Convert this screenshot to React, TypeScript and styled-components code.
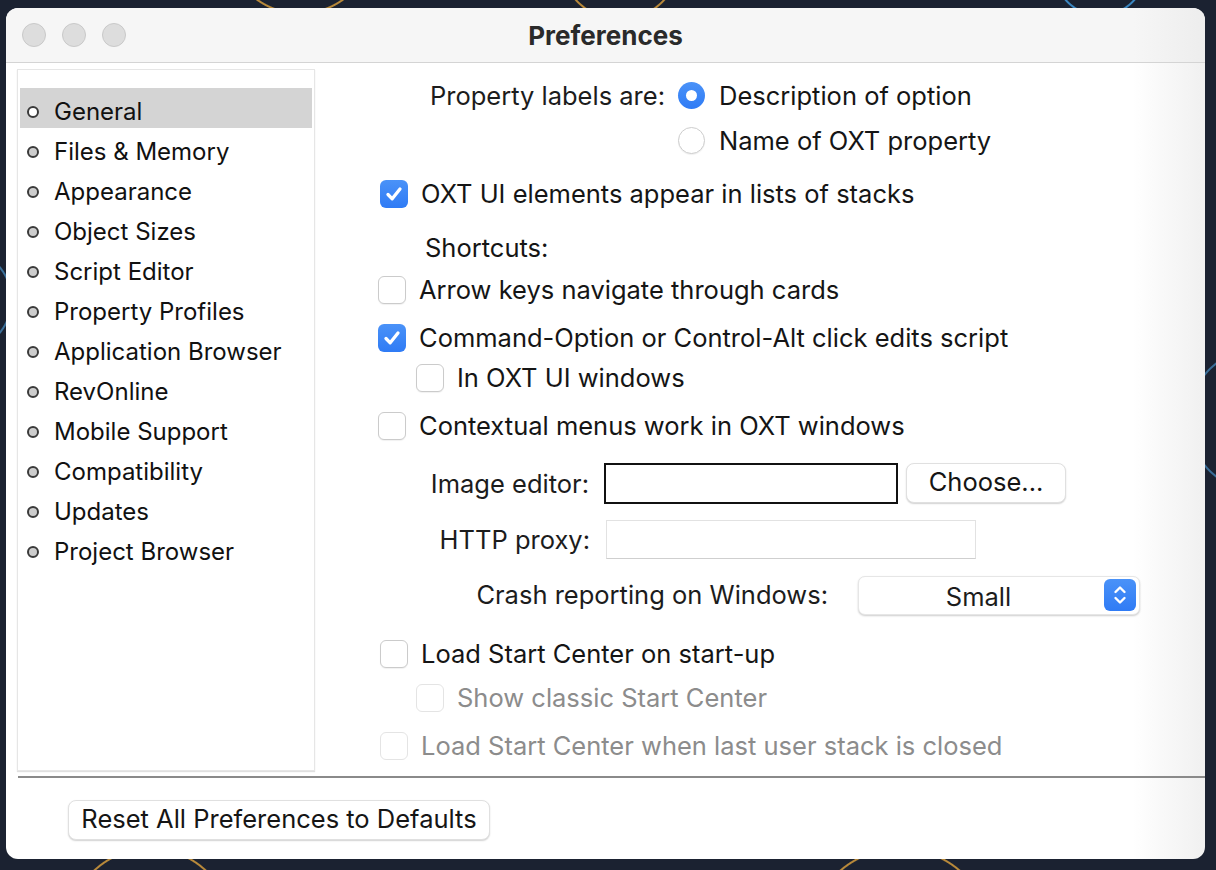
import React from "react";
import styled, { createGlobalStyle, css } from "styled-components";

const Global = createGlobalStyle`
  html, body { margin: 0; padding: 0; }
  body {
    background: #1b2231;
    font-family: Inter, "Noto Sans", "Liberation Sans", sans-serif;
    color: #1c1c1c;
    -webkit-font-smoothing: antialiased;
  }
`;

const Desktop = styled.div`
  width: 1216px;
  height: 870px;
  box-sizing: border-box;
  padding: 8px 11px 11px 6px;
  background:
    radial-gradient(circle at 300px -60px, transparent 72px, #b8893a 73px, #b8893a 74px, transparent 75px),
    radial-gradient(circle at 620px -40px, transparent 58px, #b8893a 59px, #b8893a 60px, transparent 61px),
    radial-gradient(circle at 1100px -30px, transparent 44px, #3a86c0 45px, #3a86c0 46px, transparent 47px),
    radial-gradient(circle at 1260px 420px, transparent 70px, #3a6f9a 71px, #3a6f9a 72px, transparent 73px),
    radial-gradient(circle at 150px 930px, transparent 80px, #b8893a 81px, #b8893a 82px, transparent 83px),
    radial-gradient(circle at 900px 940px, transparent 90px, #b8893a 91px, #b8893a 92px, transparent 93px),
    radial-gradient(circle at -40px 300px, transparent 50px, #3a6f9a 51px, #3a6f9a 52px, transparent 53px),
    #1b2231;
`;

const Window = styled.div`
  width: 1199px;
  height: 851px;
  border-radius: 12px;
  overflow: hidden;
  display: flex;
  flex-direction: column;
  background: linear-gradient(to right, #ffffff 0%, #ffffff 94%, #f0f0f0 100%);
`;

const TitleBar = styled.div`
  height: 54px;
  flex: none;
  display: grid;
  grid-template-columns: 1fr auto 1fr;
  align-items: center;
  background: linear-gradient(to right, #f6f6f6 0%, #f6f6f6 94%, #ededed 100%);
  border-bottom: 1px solid #d4d4d4;
`;

const Lights = styled.div`
  display: flex;
  gap: 16px;
  padding-left: 16px;
`;

const Light = styled.span`
  width: 24px;
  height: 24px;
  border-radius: 50%;
  box-sizing: border-box;
  background: #dddddd;
  border: 1px solid #c9c9c9;
`;

const Title = styled.div`
  font-size: 26px;
  font-weight: 700;
  color: #2a2a2a;
`;

const Main = styled.div`
  display: flex;
  padding: 6px 0 0 11px;
  height: 708px;
  box-sizing: border-box;
  flex: none;
`;

const Sidebar = styled.ul`
  list-style: none;
  margin: 0;
  width: 298px;
  height: 702px;
  box-sizing: border-box;
  padding: 18px 2px 0;
  border: 1px solid #e6e6e6;
  box-shadow: 0 1px 1px rgba(0, 0, 0, 0.12);
  background: #fff;
  flex: none;
`;

const NavItem = styled.li<{ $active?: boolean }>`
  height: 40px;
  box-sizing: border-box;
  display: flex;
  align-items: center;
  padding: 7px 0 0 7px;
  font-size: 24px;
  color: #111;
  background: ${(p) => (p.$active ? "#d4d4d4" : "transparent")};
`;

const Bullet = styled.span<{ $active?: boolean }>`
  width: 12px;
  height: 12px;
  box-sizing: border-box;
  border-radius: 50%;
  border: 2px solid #3a3a3a;
  background: ${(p) => (p.$active ? "#ffffff" : "#cdcdcd")};
  margin-right: 15px;
  flex: none;
`;

const Content = styled.div`
  flex: 1;
  display: flex;
  flex-direction: column;
`;

const Row = styled.div<{ $mt: number; $indent?: number; $h?: number }>`
  display: flex;
  align-items: center;
  box-sizing: border-box;
  margin-top: ${(p) => p.$mt}px;
  padding-left: ${(p) => p.$indent ?? 0}px;
  padding-bottom: 2px;
  height: ${(p) => (p.$h ?? 40) + 2}px;
  margin-bottom: -2px;
  font-size: 25.5px;
`;

const RightLabel = styled.span<{ $w: number; $gap: number }>`
  width: ${(p) => p.$w}px;
  margin-right: ${(p) => p.$gap}px;
  text-align: right;
  flex: none;
  white-space: nowrap;
`;

const Text = styled.span<{ $disabled?: boolean }>`
  white-space: nowrap;
  color: ${(p) => (p.$disabled ? "#8c8c8c" : "#151515")};
`;

const Radio = styled.span<{ $on?: boolean }>`
  width: 27px;
  height: 27px;
  border-radius: 50%;
  box-sizing: border-box;
  flex: none;
  margin-right: 14px;
  margin-top: 1px;
  display: flex;
  align-items: center;
  justify-content: center;
  ${(p) =>
    p.$on
      ? css`
          background: linear-gradient(#4a92f8, #2f7bf5);
          &::after {
            content: "";
            width: 11px;
            height: 11px;
            border-radius: 50%;
            background: #fff;
          }
        `
      : css`
          background: #fff;
          border: 1px solid #cdcdcd;
          box-shadow: 0 1px 1px rgba(0, 0, 0, 0.06);
        `}
`;

const Box = styled.span<{ $on?: boolean; $disabled?: boolean }>`
  width: 28px;
  height: 28px;
  border-radius: 6px;
  box-sizing: border-box;
  flex: none;
  margin-right: 13px;
  margin-top: 1px;
  display: flex;
  align-items: center;
  justify-content: center;
  ${(p) =>
    p.$on
      ? css`
          background: linear-gradient(#4a92f8, #2f7bf5);
        `
      : css`
          background: #fff;
          border: 1px solid ${p.$disabled ? "#e4e4e4" : "#cbcbcb"};
          box-shadow: ${p.$disabled ? "none" : "0 1px 1px rgba(0,0,0,0.06)"};
        `}
`;

const Check = () => (
  <svg width="22" height="22" viewBox="0 0 22 22">
    <path d="M5 11.5 L9.2 15.8 L17 6" fill="none" stroke="#fff" strokeWidth="3.3" strokeLinecap="round" strokeLinejoin="round" />
  </svg>
);

const Field = styled.div<{ $w: number; $h: number; $strong?: boolean }>`
  width: ${(p) => p.$w}px;
  height: ${(p) => p.$h}px;
  box-sizing: border-box;
  flex: none;
  background: #fff;
  ${(p) =>
    p.$strong
      ? css`
          border: 2px solid #111;
        `
      : css`
          border: 1px solid #e2e2e2;
          border-bottom-color: #cfcfcf;
        `}
`;

const Spacer = styled.span<{ $w: number }>`
  width: ${(p) => p.$w}px;
  flex: none;
`;

const Button = styled.button<{ $w: number }>`
  width: ${(p) => p.$w}px;
  height: 40px;
  flex: none;
  box-sizing: border-box;
  background: #fff;
  border: 1px solid #e0e0e0;
  border-radius: 8px;
  box-shadow: 0 1px 1.5px rgba(0, 0, 0, 0.18);
  font-family: inherit;
  font-size: 25.5px;
  color: #151515;
  padding: 0 0 3px;
  display: flex;
  align-items: center;
  justify-content: center;
  white-space: nowrap;
`;

const Popup = styled.div`
  width: 282px;
  height: 39px;
  box-sizing: border-box;
  flex: none;
  background: #fff;
  border-radius: 7px;
  border: 1px solid #e6e6e6;
  box-shadow: 0 1px 2px rgba(0, 0, 0, 0.2);
  display: flex;
  align-items: center;
  padding: 0 3px 0 0;
  margin-top: 2px;
`;

const PopupValue = styled.span`
  flex: 1;
  text-align: center;
  font-size: 25.5px;
  padding-right: 6px;
  padding-top: 3px;
`;

const Stepper = styled.span`
  width: 32px;
  height: 32px;
  border-radius: 6px;
  background: linear-gradient(#4a92f8, #2f7bf5);
  display: flex;
  align-items: center;
  justify-content: center;
`;

const Separator = styled.div`
  margin: 5px 0 0 12px;
  height: 2px;
  background: #8a8a8a;
  flex: none;
`;

const Footer = styled.div`
  padding: 22px 0 0 62px;
  display: flex;
`;

const navItems = [
  "General",
  "Files & Memory",
  "Appearance",
  "Object Sizes",
  "Script Editor",
  "Property Profiles",
  "Application Browser",
  "RevOnline",
  "Mobile Support",
  "Compatibility",
  "Updates",
  "Project Browser",
];

export default function App() {
  return (
    <>
      <Global />
      <Desktop>
        <Window>
          <TitleBar>
            <Lights>
              <Light />
              <Light />
              <Light />
            </Lights>
            <Title>Preferences</Title>
            <div />
          </TitleBar>
          <Main>
            <Sidebar>
              {navItems.map((n, i) => (
                <NavItem key={n} $active={i === 0}>
                  <Bullet $active={i === 0} />
                  {n}
                </NavItem>
              ))}
            </Sidebar>
            <Content>
              <Row $mt={6}>
                <RightLabel $w={350} $gap={13}>Property labels are:</RightLabel>
                <Radio $on />
                <Text>Description of option</Text>
              </Row>
              <Row $mt={5} $indent={363}>
                <Radio />
                <Text>Name of OXT property</Text>
              </Row>
              <Row $mt={13} $indent={65}>
                <Box $on>
                  <Check />
                </Box>
                <Text>OXT UI elements appear in lists of stacks</Text>
              </Row>
              <Row $mt={14} $indent={110}>
                <Text>Shortcuts:</Text>
              </Row>
              <Row $mt={2} $indent={63}>
                <Box />
                <Text>Arrow keys navigate through cards</Text>
              </Row>
              <Row $mt={8} $indent={63}>
                <Box $on>
                  <Check />
                </Box>
                <Text>Command-Option or Control-Alt click edits script</Text>
              </Row>
              <Row $mt={0} $indent={101}>
                <Box />
                <Text>In OXT UI windows</Text>
              </Row>
              <Row $mt={8} $indent={63}>
                <Box />
                <Text>Contextual menus work in OXT windows</Text>
              </Row>
              <Row $mt={17} $h={42}>
                <RightLabel $w={274} $gap={15}>Image editor:</RightLabel>
                <Field $w={294} $h={41} $strong />
                <Spacer $w={8} />
                <Button $w={160}>Choose...</Button>
              </Row>
              <Row $mt={15}>
                <RightLabel $w={275} $gap={16}>HTTP proxy:</RightLabel>
                <Field $w={370} $h={39} />
              </Row>
              <Row $mt={15}>
                <RightLabel $w={513} $gap={30}>Crash reporting on Windows:</RightLabel>
                <Popup>
                  <PopupValue>Small</PopupValue>
                  <Stepper>
                    <svg width="18" height="24" viewBox="0 0 18 24">
                      <path d="M4.5 9 L9 4.5 L13.5 9 M4.5 15 L9 19.5 L13.5 15" fill="none" stroke="#fff" strokeWidth="2.4" strokeLinecap="round" strokeLinejoin="round" />
                    </svg>
                  </Stepper>
                </Popup>
              </Row>
              <Row $mt={19} $indent={65}>
                <Box />
                <Text>Load Start Center on start-up</Text>
              </Row>
              <Row $mt={4} $indent={101}>
                <Box $disabled />
                <Text $disabled>Show classic Start Center</Text>
              </Row>
              <Row $mt={8} $indent={65}>
                <Box $disabled />
                <Text $disabled>Load Start Center when last user stack is closed</Text>
              </Row>
            </Content>
          </Main>
          <Separator />
          <Footer>
            <Button $w={422}>Reset All Preferences to Defaults</Button>
          </Footer>
        </Window>
      </Desktop>
    </>
  );
}
